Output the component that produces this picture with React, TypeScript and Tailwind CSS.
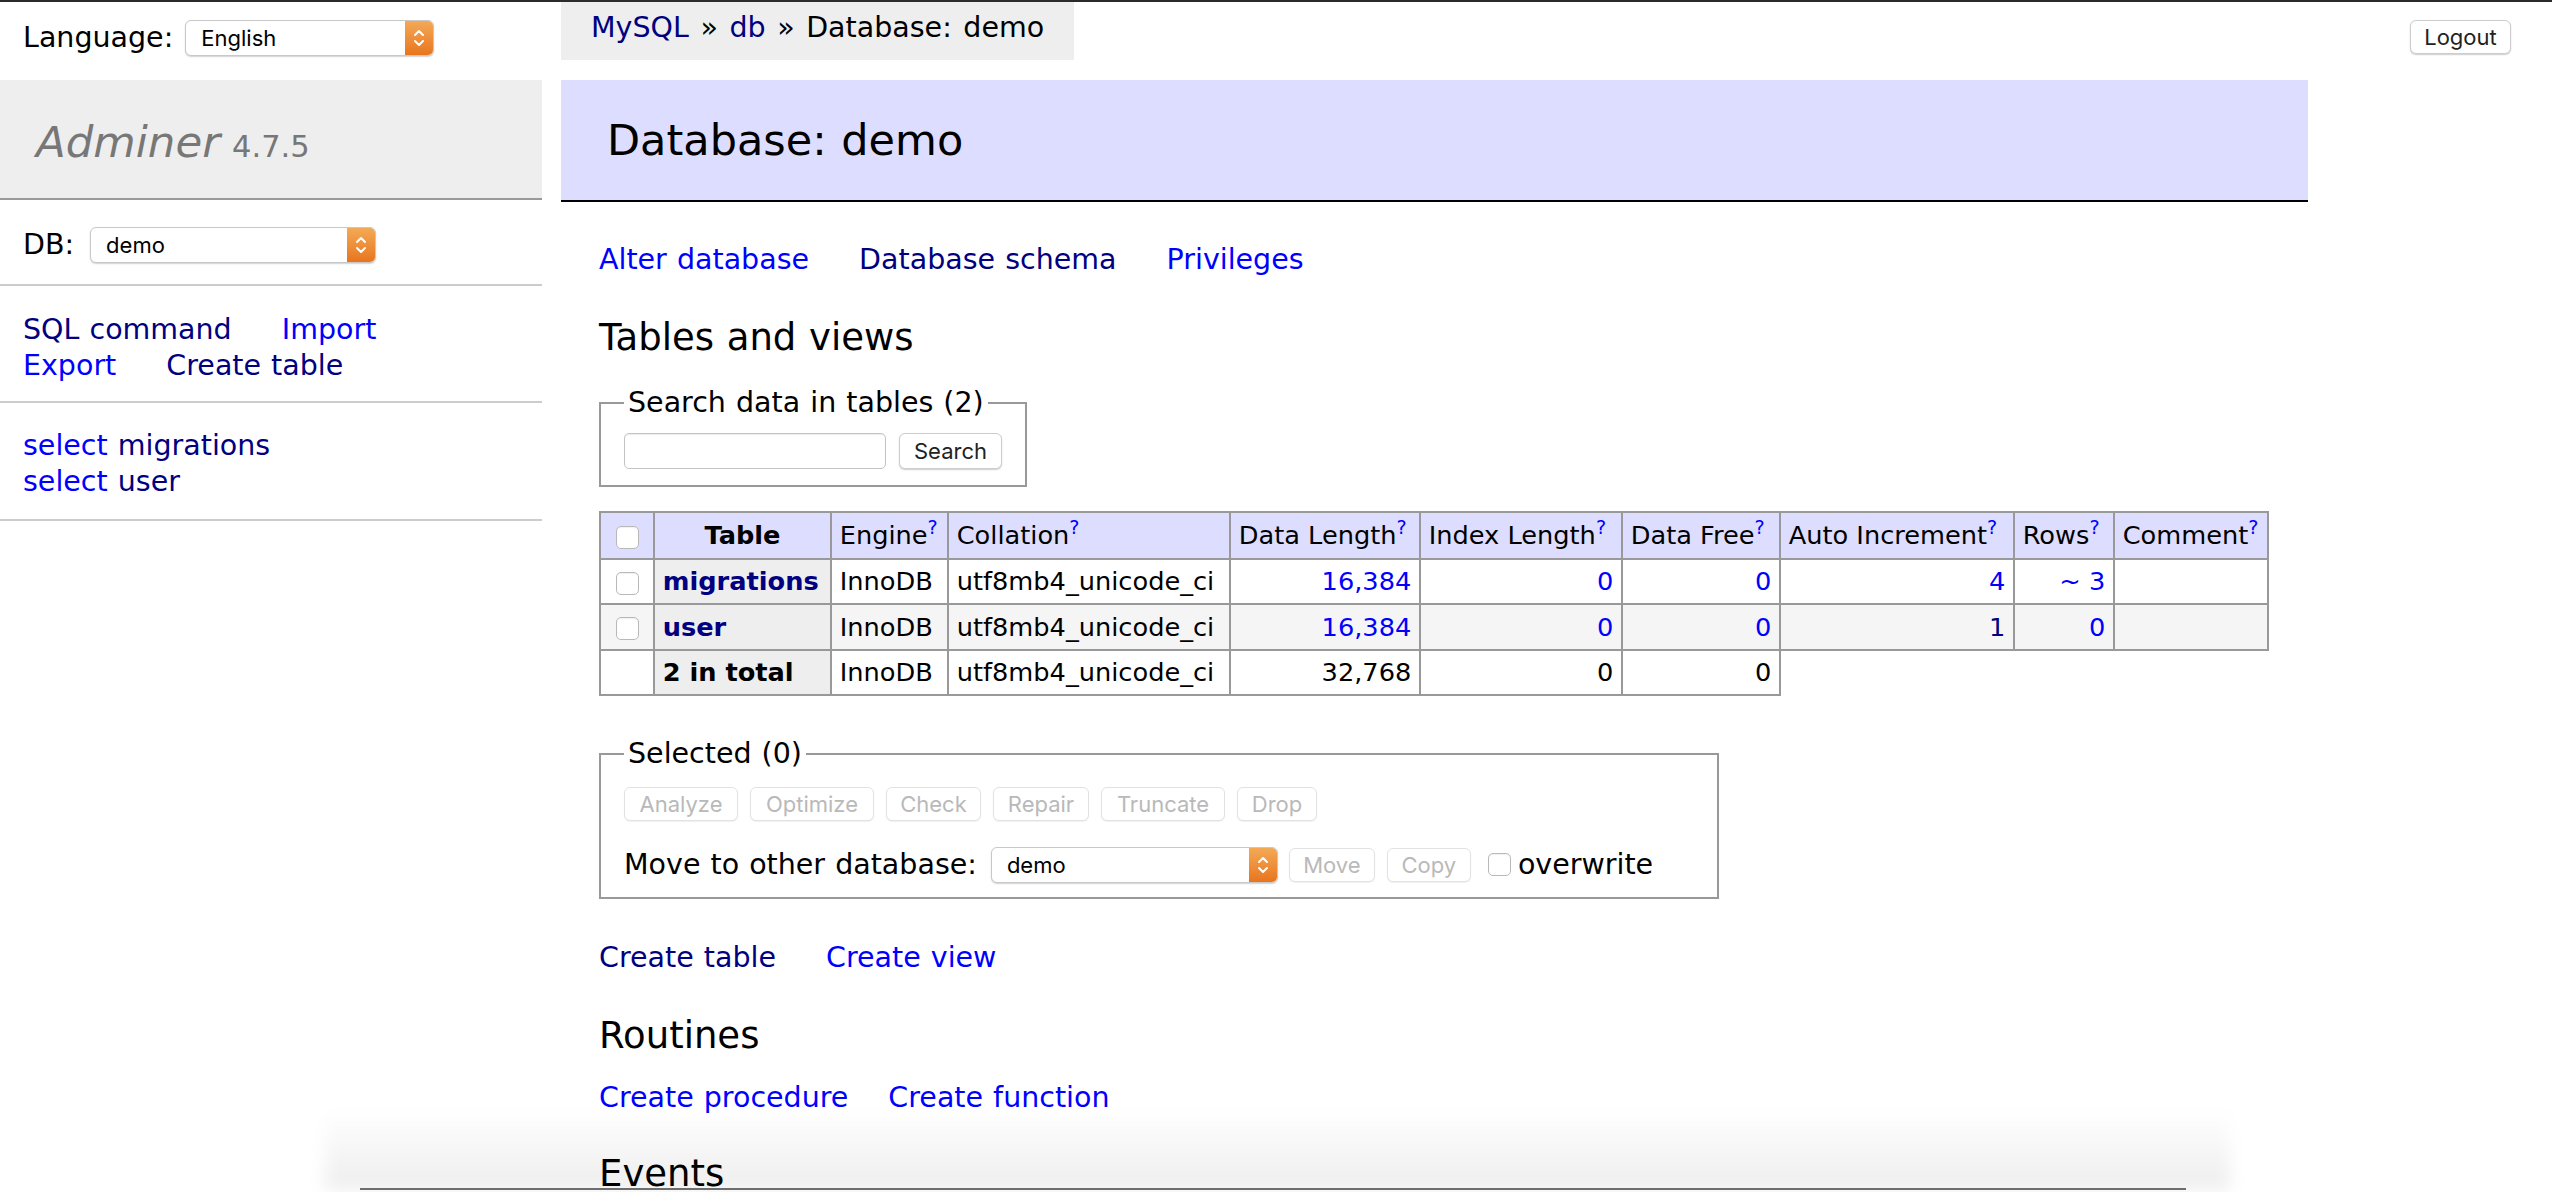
const navy = "text-[#000080]";
const blue = "text-[#0000ff]";

function Chevrons() {
  return (
    <svg width="14" height="24" viewBox="0 0 14 24" fill="none" stroke="white" strokeWidth="2" strokeLinecap="round" strokeLinejoin="round">
      <path d="M3 9 L7 5 L11 9" />
      <path d="M3 15 L7 19 L11 15" />
    </svg>
  );
}

function MacSelect({ value, className }: { value: string; className: string }) {
  return (
    <span
      className={`inline-flex h-[36px] items-stretch overflow-hidden rounded-[6px] border border-[#c8c8c8] bg-white align-middle shadow-[0_1px_1.5px_rgba(0,0,0,0.18)] ${className}`}
    >
      <span className="flex flex-1 items-center pl-[15px] font-['Inter',sans-serif] text-[22px] leading-none text-black [word-spacing:0]">
        {value}
      </span>
      <span className="flex w-[28px] items-center justify-center bg-gradient-to-b from-[#f3a955] to-[#e8751b]">
        <Chevrons />
      </span>
    </span>
  );
}

function Checkbox() {
  return (
    <span className="inline-block h-[23px] w-[23px] rounded-[5px] border border-[#b9b9b9] bg-white align-middle shadow-[inset_0_1px_1px_rgba(0,0,0,0.06)]" />
  );
}

function Button({ children, className, disabled }: { children: string; className: string; disabled?: boolean }) {
  return (
    <span
      className={`inline-flex items-center justify-center rounded-[6px] border bg-white font-['Inter',sans-serif] text-[22px] leading-none [word-spacing:0] ${
        disabled
          ? "border-[#e2e2e2] text-[#b9b9b9] shadow-[0_1px_1px_rgba(0,0,0,0.06)]"
          : "border-[#cdcdcd] text-[#222] shadow-[0_1px_1.5px_rgba(0,0,0,0.2)]"
      } ${className}`}
    >
      {children}
    </span>
  );
}

function Help() {
  return <sup className={`${blue} text-[0.75em]`}>?</sup>;
}

function Sidebar() {
  return (
    <aside className="w-[542px] shrink-0">
      <div className="flex h-[72px] items-center px-[23px]">
        <span>Language:</span>
        <MacSelect value="English" className="ml-[12px] w-[249px]" />
      </div>

      <h1 className="mt-[6px] h-[120px] border-b-2 border-[#999] bg-[#eee] px-[36px] pt-[35px] font-normal text-[#777]">
        <span className="text-[43.5px] italic leading-[1.25]">Adminer</span>{" "}
        <span className="ml-[2px] text-[30.5px]">4.7.5</span>
      </h1>

      <div className="flex h-[86px] items-center border-b-2 border-[#ccc] px-[23px] pt-[6px]">
        <span>DB:</span>
        <MacSelect value="demo" className="ml-[16px] w-[286px]" />
      </div>

      <div className="whitespace-nowrap border-b-2 border-[#ccc] px-[23px] pb-[18px] pt-[26px]">
        <div>
          <a className={`${navy} mr-[40px]`}>SQL command</a> <a className={blue}>Import</a>
        </div>
        <div>
          <a className={`${blue} mr-[40px]`}>Export</a> <a className={navy}>Create table</a>
        </div>
      </div>

      <ul className="whitespace-nowrap border-b-2 border-[#ccc] px-[23px] pb-[19px] pt-[25px]">
        <li>
          <a className={blue}>select</a> <a className={navy}>migrations</a>
        </li>
        <li>
          <a className={blue}>select</a> <a className={navy}>user</a>
        </li>
      </ul>
    </aside>
  );
}

const td = "border-2 border-[#999] px-[7.7px] py-[5.75px]";
const th = "border-2 border-[#999] bg-[#eee] px-[7.7px] py-[5.75px] text-left font-bold";

function TablesList() {
  return (
    <table className="mt-[24px] w-[1668px] table-fixed border-collapse text-[25.65px] leading-[1.25] [word-spacing:0]">
      <colgroup>
        <col className="w-[54px]" />
        <col className="w-[177px]" />
        <col className="w-[117px]" />
        <col className="w-[282px]" />
        <col className="w-[190px]" />
        <col className="w-[202px]" />
        <col className="w-[158px]" />
        <col className="w-[234px]" />
        <col className="w-[100px]" />
        <col className="w-[154px]" />
      </colgroup>
      <thead>
        <tr className="bg-[#ddf]">
          <td className={`${td} text-center`}>
            <Checkbox />
          </td>
          <th className="border-2 border-[#999] px-[12.8px] py-[6.5px] text-center font-bold">Table</th>
          <td className={td}>
            Engine
            <Help />
          </td>
          <td className={td}>
            Collation
            <Help />
          </td>
          <td className={td}>
            Data Length
            <Help />
          </td>
          <td className={td}>
            Index Length
            <Help />
          </td>
          <td className={td}>
            Data Free
            <Help />
          </td>
          <td className={td}>
            Auto Increment
            <Help />
          </td>
          <td className={td}>
            Rows
            <Help />
          </td>
          <td className={td}>
            Comment
            <Help />
          </td>
        </tr>
      </thead>
      <tbody>
        <tr>
          <td className={`${td} text-center`}>
            <Checkbox />
          </td>
          <th className={th}>
            <a className={navy}>migrations</a>
          </th>
          <td className={td}>InnoDB</td>
          <td className={td}>utf8mb4_unicode_ci</td>
          <td className={`${td} text-right ${blue}`}>16,384</td>
          <td className={`${td} text-right ${blue}`}>0</td>
          <td className={`${td} text-right ${blue}`}>0</td>
          <td className={`${td} text-right ${blue}`}>4</td>
          <td className={`${td} text-right ${blue}`}>~ 3</td>
          <td className={td}></td>
        </tr>
        <tr className="bg-[#f5f5f5]">
          <td className={`${td} text-center`}>
            <Checkbox />
          </td>
          <th className={th}>
            <a className={navy}>user</a>
          </th>
          <td className={td}>InnoDB</td>
          <td className={td}>utf8mb4_unicode_ci</td>
          <td className={`${td} text-right ${blue}`}>16,384</td>
          <td className={`${td} text-right ${blue}`}>0</td>
          <td className={`${td} text-right ${blue}`}>0</td>
          <td className={`${td} text-right ${navy}`}>1</td>
          <td className={`${td} text-right ${blue}`}>0</td>
          <td className={td}></td>
        </tr>
        <tr>
          <td className={td}></td>
          <th className={th}>2 in total</th>
          <td className={td}>InnoDB</td>
          <td className={td}>utf8mb4_unicode_ci</td>
          <td className={`${td} text-right`}>32,768</td>
          <td className={`${td} text-right`}>0</td>
          <td className={`${td} text-right`}>0</td>
        </tr>
      </tbody>
    </table>
  );
}

function Main() {
  return (
    <main className="min-w-0 flex-1">
      <div className="flex items-start justify-between">
        <div className="ml-[19px] h-[58px] whitespace-nowrap bg-[#eee] px-[30px] leading-[51px] [word-spacing:2.5px]">
          <a className={navy}>MySQL</a> » <a className={navy}>db</a> » Database: demo
        </div>
        <Button className="mr-[41px] mt-[18px] h-[34px] w-[101px]">Logout</Button>
      </div>

      <h2 className="ml-[19px] mt-[20px] h-[122px] w-[1747px] border-b-2 border-black bg-[#ddf] pl-[46px] text-[43px] font-normal leading-[120px]">
        Database: demo
      </h2>

      <div className="pl-[57px]">
        <p className="mt-[40px] whitespace-nowrap">
          <a className={`${blue} mr-[40px]`}>Alter database</a> <a className={`${navy} mr-[40px]`}>Database schema</a>{" "}
          <a className={blue}>Privileges</a>
        </p>

        <h3 className="mt-[37px] text-[37px] font-normal leading-[1.25]">Tables and views</h3>

        <div>
          <fieldset className="mt-[24px] inline-block border-2 border-[#999] px-[23px] pb-[16px] pt-[12px]">
            <legend className="px-[4px]">Search data in tables (2)</legend>
            <div className="flex items-center gap-[13px]">
              <span className="inline-block h-[36px] w-[262px] rounded-[5px] border border-[#c4c4c4] bg-white shadow-[inset_0_1px_1px_rgba(0,0,0,0.08)]" />
              <Button className="h-[36px] w-[103px]">Search</Button>
            </div>
          </fieldset>
        </div>

        <TablesList />

        <div className="mt-[40px] pb-[18px]">
          <fieldset className="w-[1120px] border-2 border-[#999] px-[23px] pb-[14px] pt-[14px]">
            <legend className="px-[4px]">Selected (0)</legend>
            <div className="flex h-[36px] items-center gap-[12px]">
              <Button disabled className="h-[34px] w-[114px]">Analyze</Button>
              <Button disabled className="h-[34px] w-[124px]">Optimize</Button>
              <Button disabled className="h-[34px] w-[95px]">Check</Button>
              <Button disabled className="h-[34px] w-[96px]">Repair</Button>
              <Button disabled className="h-[34px] w-[124px]">Truncate</Button>
              <Button disabled className="h-[34px] w-[80px]">Drop</Button>
            </div>
            <div className="mt-[25px] flex h-[36px] items-center whitespace-nowrap">
              <span>Move to other database:</span>
              <MacSelect value="demo" className="ml-[14px] w-[287px]" />
              <Button disabled className="ml-[11px] h-[34px] w-[86px]">Move</Button>
              <Button disabled className="ml-[12px] h-[34px] w-[84px]">Copy</Button>
              <span className="ml-[17px] flex items-center">
                <Checkbox />
              </span>
              <span className="ml-[7px]">overwrite</span>
            </div>
          </fieldset>
        </div>

        <p className="mt-[23px] whitespace-nowrap">
          <a className={`${navy} mr-[40px]`}>Create table</a> <a className={blue}>Create view</a>
        </p>

        <h3 className="mt-[37px] text-[37px] font-normal leading-[1.25]">Routines</h3>

        <p className="mt-[21px] whitespace-nowrap">
          <a className={`${blue} mr-[40px]`}>Create procedure</a>
          <a className={blue}>Create function</a>
        </p>

        <h3 className="mt-[36px] text-[37px] font-normal leading-[1.25]">Events</h3>
      </div>
    </main>
  );
}

export default function App() {
  return (
    <div className="relative h-[1192px] w-full overflow-hidden bg-white font-['DejaVu_Sans',Verdana,sans-serif] text-[28.5px] leading-[1.25] text-black [word-spacing:1px]">
      <div className="h-[2px] bg-[#2b2b2b]" />
      <div className="flex">
        <Sidebar />
        <Main />
      </div>

      {/* window shadow bleeding in at the bottom edge */}
      <div className="pointer-events-none absolute bottom-[2px] left-[325px] h-[80px] w-[1905px] bg-gradient-to-b from-transparent to-black/[0.07] blur-[8px]" />
      <div className="pointer-events-none absolute bottom-[2px] left-[360px] h-[2px] w-[1826px] bg-[#6e6e6e]" />
    </div>
  );
}
